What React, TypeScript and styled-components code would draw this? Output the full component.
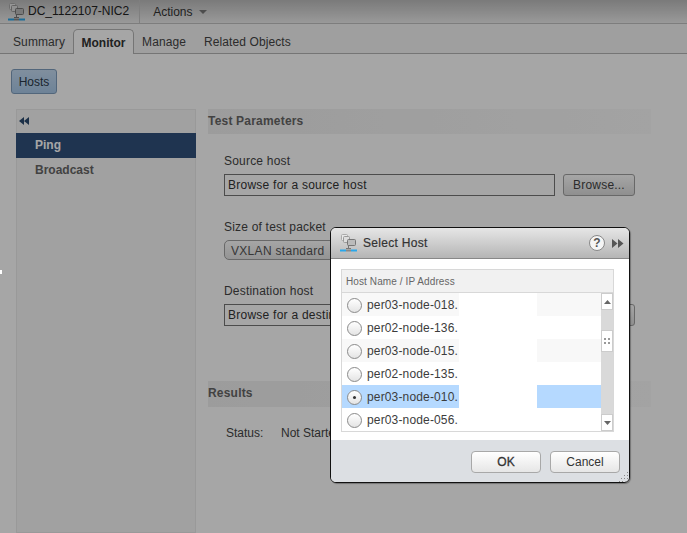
import React from 'react'
import styled, { createGlobalStyle } from 'styled-components'

const GlobalStyle = createGlobalStyle`
    html, body {
        margin: 0;
        padding: 0;
        background: #fff;
    }
    body {
        font-family: "Liberation Sans", Arial, sans-serif;
        font-size: 12px;
        color: #333;
    }
`

const hosts = [
    { name: 'per03-node-018.', shaded: true },
    { name: 'per02-node-136.' },
    { name: 'per03-node-015.', shaded: true },
    { name: 'per02-node-135.' },
    { name: 'per03-node-010.', selected: true },
    { name: 'per03-node-056.' },
]

const NetworkIcon = () => (
    <svg width="17" height="18" viewBox="0 0 17 18">
        <rect x="1.500" y="0.500" width="6" height="6" rx="1" fill="#e8e8e8" stroke="#aaa" />
        <rect x="3.500" y="2.500" width="6" height="6" rx="1" fill="#ddd" stroke="#999" />
        <rect x="7.500" y="5.500" width="8" height="6" rx="1" fill="#bbb" stroke="#777" />
        <path d="M8.500 11v3M6 14.500h5" stroke="#777" fill="none" />
        <path d="M0 16.500h6M11 16.500h6" stroke="#2aa7ea" strokeWidth="2" fill="none" />
        <path d="M6 16.500h5" stroke="#888" strokeWidth="2" fill="none" />
    </svg>
)

const App = () => {
    return (
        <Page>
            <GlobalStyle />
            <TitleBar>
                <NetworkIcon />
                <Title>DC_1122107-NIC2</Title>
                <Actions>
                    Actions <Caret />
                </Actions>
            </TitleBar>
            <TabBar>
                <Tab>Summary</Tab>
                <ActiveTab>Monitor</ActiveTab>
                <Tab>Manage</Tab>
                <Tab>Related Objects</Tab>
            </TabBar>
            <HostsButton>Hosts</HostsButton>
            <Body>
                <Sidebar>
                    <Collapse>
                        <svg width="10" height="8" viewBox="0 0 10 8">
                            <path d="M5 0v8L0 4zM10 0v8L5 4z" fill="#2b4a6f" />
                        </svg>
                    </Collapse>
                    <SideItem $active>Ping</SideItem>
                    <SideItem>Broadcast</SideItem>
                </Sidebar>
                <Content>
                    <SectionHead>Test Parameters</SectionHead>
                    <Form>
                        <Label>Source host</Label>
                        <InputRow>
                            <Input>Browse for a source host</Input>
                            <BrowseButton>Browse...</BrowseButton>
                        </InputRow>
                        <PacketLabel>Size of test packet</PacketLabel>
                        <Select>VXLAN standard</Select>
                        <DestLabel>Destination host</DestLabel>
                        <InputRow>
                            <Input>Browse for a destination host</Input>
                            <BrowseButton>Browse...</BrowseButton>
                        </InputRow>
                    </Form>
                    <ResultsHead>Results</ResultsHead>
                    <StatusRow>
                        <StatusKey>Status:</StatusKey>
                        <span>Not Started</span>
                    </StatusRow>
                </Content>
            </Body>

            <Overlay />
            <CursorMark />

            <Dialog>
                <DialogHead>
                    <NetworkIcon />
                    <DialogTitle>Select Host</DialogTitle>
                    <HelpIcon>?</HelpIcon>
                    <svg width="12" height="9" viewBox="0 0 12 9">
                        <path d="M0 0v9l5.500-4.500zM6 0v9l5.500-4.500z" fill="#555" />
                    </svg>
                </DialogHead>
                <DialogBody>
                    <Table>
                        <TableHead>Host Name / IP Address</TableHead>
                        <TableMain>
                            <Rows>
                                {hosts.map((host) => (
                                    <Row
                                        key={host.name}
                                        $shaded={host.shaded}
                                        $selected={host.selected}
                                    >
                                        <Radio $checked={host.selected} />
                                        <HostName>{host.name}</HostName>
                                        <Redacted />
                                    </Row>
                                ))}
                            </Rows>
                            <Scrollbar>
                                <ScrollButton>
                                    <svg width="7" height="4" viewBox="0 0 7 4">
                                        <path d="M3.500 0L7 4H0z" fill="#666" />
                                    </svg>
                                </ScrollButton>
                                <Thumb>
                                    <svg width="6" height="6" viewBox="0 0 6 6">
                                        <path d="M0 0h2v2H0zM4 0h2v2H4zM0 4h2v2H0zM4 4h2v2H4z" fill="#999" />
                                    </svg>
                                </Thumb>
                                <ScrollButtonEnd>
                                    <svg width="7" height="4" viewBox="0 0 7 4">
                                        <path d="M0 0h7L3.500 4z" fill="#666" />
                                    </svg>
                                </ScrollButtonEnd>
                            </Scrollbar>
                        </TableMain>
                    </Table>
                </DialogBody>
                <DialogFoot>
                    <DialogButton $strong>OK</DialogButton>
                    <DialogButton>Cancel</DialogButton>
                    <Grip>
                        <svg width="10" height="10" viewBox="0 0 10 10">
                            <path d="M8 0h1v1H8zM5 3h1v1H5zM8 3h1v1H8zM2 6h1v1H2zM5 6h1v1H5zM8 6h1v1H8zM0 9h1v1H0zM3 9h1v1H3zM6 9h1v1H6zM9 9h1v1H9z" fill="#888" />
                        </svg>
                    </Grip>
                </DialogFoot>
            </Dialog>
        </Page>
    )
}

const Page = styled.div`
    position: relative;
    width: 687px;
    height: 533px;
    overflow: hidden;
    background: #fff;
`
const TitleBar = styled.header`
    display: flex;
    align-items: center;
    height: 23px;
    padding-left: 8px;
    background: linear-gradient(to bottom, #bcbcbc, #ececec);
    border-bottom: 1px solid #c0c0c0;
`
const Title = styled.span`
    margin-left: 3px;
    padding-right: 10px;
    border-right: 1px solid #c4c4c4;
    line-height: 23px;
    font-size: 12px;
    color: #222;
`
const Actions = styled.span`
    display: flex;
    align-items: center;
    gap: 6px;
    margin-left: 13px;
    color: #333;
`
const Caret = styled.i`
    width: 0;
    height: 0;
    border-left: 4px solid transparent;
    border-right: 4px solid transparent;
    border-top: 4px solid #777;
`
const TabBar = styled.nav`
    display: flex;
    align-items: flex-end;
    height: 29px;
    padding-left: 13px;
    background: #f4f4f4;
    border-bottom: 1px solid #b4b4b4;
`
const Tab = styled.span`
    height: 22px;
    margin-right: 18px;
    line-height: 22px;
    color: #444;
    letter-spacing: 0.1px;
`
const ActiveTab = styled.span`
    position: relative;
    top: 1px;
    box-sizing: border-box;
    width: 61px;
    height: 25px;
    margin: 0 8px 0 -10px;
    border: 1px solid #b4b4b4;
    border-bottom: 0;
    border-radius: 5px 5px 0 0;
    background: #fff;
    text-align: center;
    line-height: 26px;
    font-weight: bold;
    color: #333;
`
const HostsButton = styled.button`
    display: block;
    box-sizing: border-box;
    width: 46px;
    height: 25px;
    margin: 15px 0 15px 11px;
    padding: 0;
    border: 1px solid #7f9dbd;
    border-radius: 3px;
    background: linear-gradient(to bottom, #c5dcf3, #a9c9e9);
    font: 12px "Liberation Sans", Arial, sans-serif;
    color: #2a3a4a;
`
const Body = styled.main`
    display: flex;
    gap: 12px;
    padding-left: 16px;
`
const Sidebar = styled.aside`
    box-sizing: border-box;
    width: 180px;
    height: 424px;
    box-shadow: inset 0 0 0 1px #ebebeb;
    background: #f8f8f8;
`
const Collapse = styled.div`
    display: flex;
    align-items: center;
    height: 24px;
    padding-left: 3px;
`
const SideItem = styled.div<{ $active?: boolean }>`
    height: 25px;
    padding-left: 19px;
    line-height: 24px;
    font-weight: bold;
    background: ${({ $active }) => ($active ? '#30517c' : 'transparent')};
    color: ${({ $active }) => ($active ? '#fff' : '#666')};
`
const Content = styled.section`
    width: 443px;
`
const SectionHead = styled.h3`
    height: 25px;
    margin: 0;
    background: linear-gradient(to right, #f0f0f0, #fafafa);
    line-height: 24px;
    font-size: 12px;
    color: #666;
    letter-spacing: 0.2px;
`
const Form = styled.div`
    padding: 20px 16px 0;
    height: 227px;
    box-sizing: content-box;
`
const Label = styled.div`
    height: 20px;
    padding-top: 1px;
    box-sizing: border-box;
    line-height: 12px;
    color: #444;
    letter-spacing: 0.2px;
`
const PacketLabel = styled(Label)`
    margin-top: 24px;
    height: 20px;
`
const DestLabel = styled(Label)`
    margin-top: 24px;
    height: 20px;
`
const InputRow = styled.div`
    display: flex;
    gap: 8px;
    width: 411px;
`
const Input = styled.div`
    box-sizing: border-box;
    width: 331px;
    height: 22px;
    padding-left: 3px;
    border: 1px solid #767676;
    background: #fff;
    line-height: 20px;
    color: #333;
    letter-spacing: 0.25px;
    white-space: nowrap;
    overflow: hidden;
`
const BrowseButton = styled.button`
    box-sizing: border-box;
    width: 72px;
    height: 22px;
    padding: 0;
    border: 1px solid #a0a0a0;
    border-radius: 3px;
    background: linear-gradient(to bottom, #fff, #dcdcdc);
    font: 12px "Liberation Sans", Arial, sans-serif;
    letter-spacing: 0.2px;
    color: #444;
`
const Select = styled.div`
    box-sizing: border-box;
    width: 180px;
    height: 20px;
    padding-left: 6px;
    border: 1px solid #a0a0a0;
    border-radius: 5px;
    background: linear-gradient(to bottom, #fff, #e4e4e4);
    line-height: 20px;
    color: #555;
    letter-spacing: 0.3px;
`
const ResultsHead = styled(SectionHead)`
    height: 26px;
    margin-top: 0;
`
const StatusRow = styled.div`
    display: flex;
    margin-top: 19px;
    padding-left: 18px;
    color: #444;
`
const StatusKey = styled.span`
    width: 55px;
`
const Overlay = styled.div`
    position: absolute;
    inset: 0;
    background: rgba(0, 0, 0, 0.35);
`
const CursorMark = styled.div`
    position: absolute;
    left: 0;
    top: 270px;
    width: 2px;
    height: 4px;
    background: #fff;
`
const Dialog = styled.div`
    position: absolute;
    left: 330px;
    top: 227px;
    display: flex;
    flex-direction: column;
    box-sizing: border-box;
    width: 300px;
    height: 256px;
    border: 1px solid #111;
    border-radius: 6px;
    background: #fff;
    overflow: hidden;
    box-shadow: 1px 1px 1px rgba(0, 0, 0, 0.3);
`
const DialogHead = styled.div`
    display: flex;
    align-items: center;
    flex: none;
    height: 31px;
    padding: 0 5px 0 9px;
    box-sizing: border-box;
    background: linear-gradient(to bottom, #e6e6e6, #b5b5b5);
    border-bottom: 1px solid #888;
`
const DialogTitle = styled.span`
    flex: 1;
    margin-left: 6px;
    font-size: 12px;
    color: #333;
    letter-spacing: 0.3px;
    -webkit-text-stroke: 0.2px #333;
`
const HelpIcon = styled.span`
    box-sizing: border-box;
    width: 16px;
    height: 16px;
    margin-right: 7px;
    border: 1px solid #888;
    border-radius: 50%;
    background: #f5f5f5;
    text-align: center;
    line-height: 14px;
    font-size: 12px;
    font-weight: bold;
    color: #555;
`
const DialogBody = styled.div`
    flex: 1;
    padding: 10px 15px 0 10px;
`
const Table = styled.div`
    border: 1px solid #d8d8d8;
`
const TableHead = styled.div`
    height: 22px;
    padding-left: 4px;
    border-bottom: 1px solid #d8d8d8;
    background: #f1f1f1;
    line-height: 23px;
    font-size: 10px;
    letter-spacing: 0.1px;
    color: #666;
`
const TableMain = styled.div`
    display: flex;
`
const Rows = styled.div`
    flex: 1;
`
const Row = styled.div<{ $shaded?: boolean; $selected?: boolean }>`
    display: flex;
    align-items: center;
    box-sizing: border-box;
    height: 23px;
    padding: 1px 0 0 5px;
    background: ${({ $shaded, $selected }) =>
        $selected ? '#b5d9ff' : $shaded ? '#f8f8f8' : '#fff'};
`
const Radio = styled.span<{ $checked?: boolean }>`
    display: flex;
    align-items: center;
    justify-content: center;
    box-sizing: border-box;
    width: 15px;
    height: 15px;
    border: 1px solid #8a8a8a;
    border-radius: 50%;
    background: linear-gradient(to bottom, #fff, #e4e4e4);
    &::after {
        content: '';
        width: 3px;
        height: 3px;
        border-radius: 50%;
        background: ${({ $checked }) => ($checked ? '#333' : 'transparent')};
    }
`
const HostName = styled.span`
    width: 92px;
    margin-left: 5px;
    font-size: 12px;
    color: #3c3c3c;
    letter-spacing: 0.15px;
    white-space: nowrap;
    overflow: hidden;
`
const Redacted = styled.span`
    align-self: stretch;
    width: 78px;
    margin-top: -1px;
    background: #fff;
`
const Scrollbar = styled.div`
    display: flex;
    flex-direction: column;
    flex: none;
    width: 12px;
    height: 138px;
    background: #d9d9d9;
`
const ScrollButton = styled.div`
    display: flex;
    align-items: center;
    justify-content: center;
    box-sizing: border-box;
    height: 17px;
    border: 1px solid #ccc;
    background: #fff;
`
const ScrollButtonEnd = styled(ScrollButton)`
    margin-top: auto;
`
const Thumb = styled(ScrollButton)`
    height: 22px;
    margin-top: 20px;
`
const DialogFoot = styled.div`
    position: relative;
    display: flex;
    justify-content: flex-end;
    align-items: flex-start;
    gap: 9px;
    flex: none;
    height: 42px;
    padding: 11px 9px 0 0;
    box-sizing: border-box;
    background: #dcdfe3;
`
const DialogButton = styled.button<{ $strong?: boolean }>`
    box-sizing: border-box;
    width: 70px;
    height: 22px;
    padding: 0;
    border: 1px solid #a8a8a8;
    border-radius: 4px;
    background: linear-gradient(to bottom, #fff, #e6e6e6);
    font: 12px "Liberation Sans", Arial, sans-serif;
    -webkit-text-stroke: ${({ $strong }) => ($strong ? '0.3px #333' : '0')};
    color: #333;
`
const Grip = styled.span`
    position: absolute;
    right: 0;
    bottom: 0;
    width: 10px;
    height: 10px;
    line-height: 0;
`

export default App
